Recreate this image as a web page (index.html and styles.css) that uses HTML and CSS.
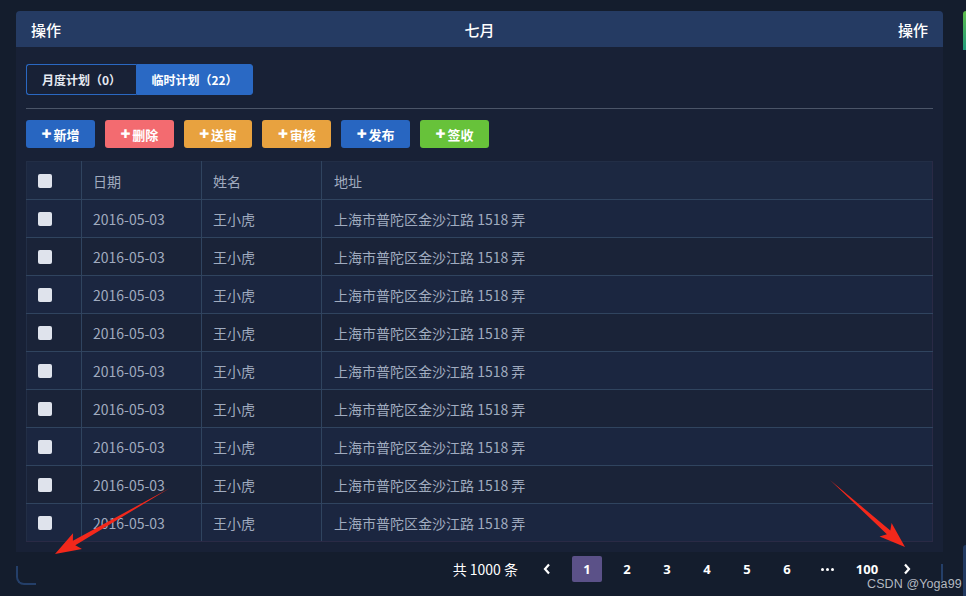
FILE: index.html
```html
<!DOCTYPE html>
<html lang="zh-CN">
<head>
<meta charset="utf-8">
<title>计划</title>
<link rel="stylesheet" href="styles.css">
</head>
<body>
<div class="page">
  <div class="main">
    <div class="panel">
      <div class="panel-head">
        <span>操作</span>
        <span>七月</span>
        <span>操作</span>
      </div>
      <div class="panel-body">
        <div class="tabs">
          <div class="tab">月度计划（0）</div>
          <div class="tab active">临时计划（22）</div>
        </div>
        <div class="divider"></div>
        <div class="actions">
          <button class="btn blue"><span class="plus">✚</span>新增</button>
          <button class="btn red"><span class="plus">✚</span>删除</button>
          <button class="btn orange"><span class="plus">✚</span>送审</button>
          <button class="btn orange"><span class="plus">✚</span>审核</button>
          <button class="btn blue"><span class="plus">✚</span>发布</button>
          <button class="btn green"><span class="plus">✚</span>签收</button>
        </div>
        <table class="grid">
          <thead>
            <tr><th class="c-chk"><span class="chk"></span></th><th class="c-date">日期</th><th class="c-name">姓名</th><th>地址</th></tr>
          </thead>
          <tbody>
            <tr><td class="c-chk"><span class="chk"></span></td><td>2016-05-03</td><td>王小虎</td><td>上海市普陀区金沙江路 1518 弄</td></tr>
            <tr><td class="c-chk"><span class="chk"></span></td><td>2016-05-03</td><td>王小虎</td><td>上海市普陀区金沙江路 1518 弄</td></tr>
            <tr><td class="c-chk"><span class="chk"></span></td><td>2016-05-03</td><td>王小虎</td><td>上海市普陀区金沙江路 1518 弄</td></tr>
            <tr><td class="c-chk"><span class="chk"></span></td><td>2016-05-03</td><td>王小虎</td><td>上海市普陀区金沙江路 1518 弄</td></tr>
            <tr><td class="c-chk"><span class="chk"></span></td><td>2016-05-03</td><td>王小虎</td><td>上海市普陀区金沙江路 1518 弄</td></tr>
            <tr><td class="c-chk"><span class="chk"></span></td><td>2016-05-03</td><td>王小虎</td><td>上海市普陀区金沙江路 1518 弄</td></tr>
            <tr><td class="c-chk"><span class="chk"></span></td><td>2016-05-03</td><td>王小虎</td><td>上海市普陀区金沙江路 1518 弄</td></tr>
            <tr><td class="c-chk"><span class="chk"></span></td><td>2016-05-03</td><td>王小虎</td><td>上海市普陀区金沙江路 1518 弄</td></tr>
            <tr><td class="c-chk"><span class="chk"></span></td><td>2016-05-03</td><td>王小虎</td><td>上海市普陀区金沙江路 1518 弄</td></tr>
          </tbody>
        </table>
      </div>
    </div>
    <div class="pager">
      <span class="corner"></span>
      <span class="total">共 1000 条</span>
      <span class="pg nav"><svg width="8" height="12" viewBox="0 0 8 12"><path d="M6 1.5 L2 6 L6 10.5" fill="none" stroke="#fff" stroke-width="2.2"/></svg></span>
      <span class="pg current">1</span>
      <span class="pg">2</span>
      <span class="pg">3</span>
      <span class="pg">4</span>
      <span class="pg">5</span>
      <span class="pg">6</span>
      <span class="pg more"><i class="dot"></i><i class="dot"></i><i class="dot"></i></span>
      <span class="pg wide">100</span>
      <span class="pg nav"><svg width="8" height="12" viewBox="0 0 8 12"><path d="M2 1.5 L6 6 L2 10.5" fill="none" stroke="#fff" stroke-width="2.2"/></svg></span>
      <span class="corner-r"></span>
    </div>
  </div>
  <div class="side">
    <span class="side-green"></span>
    <span class="side-blue"></span>
  </div>
</div>
<svg class="marks" width="966" height="596" viewBox="0 0 966 596">
  <polygon points="170,488 75.3,545.2 82,548.9 55,554 73,533.3 72.9,540.8" fill="#f3281b"/>
  <polygon points="830,480 886.9,534.2 879.6,536.4 905,547 891.6,523 890.3,530.5" fill="#f3281b"/>
</svg>
<div class="watermark">CSDN @Yoga99</div>
</body>
</html>
```

FILE: styles.css
```css
* { box-sizing: border-box; }
html, body {
  margin: 0;
  padding: 0;
  width: 966px;
  height: 596px;
  overflow: hidden;
  background: #141d2d;
  font-family: "Noto Sans CJK SC", "Noto Sans", sans-serif;
}
.page {
  position: relative;
  display: flex;
  height: 596px;
  padding-top: 11px;
}
.main {
  width: 927px;
  margin-left: 16px;
  display: flex;
  flex-direction: column;
}
.panel {
  background: #182136;
  border-radius: 4px 4px 0 0;
}
.panel-head {
  height: 36px;
  background: #253b63;
  border-radius: 4px 4px 0 0;
  display: flex;
  align-items: center;
  justify-content: space-between;
  padding: 0 15px;
  color: #ffffff;
  font-size: 15px;
  font-weight: 500;
}
.panel-body {
  padding: 17px 10px 10px;
}
.tabs {
  display: flex;
  height: 31px;
}
.tab {
  width: 110px;
  height: 31px;
  display: flex;
  align-items: center;
  justify-content: center;
  font-size: 12px;
  font-weight: 700;
  color: #e6eaf2;
  border: 1px solid #2a68c2;
  border-right: none;
  border-radius: 3px 0 0 3px;
  background: #182136;
}
.tab.active {
  width: 117px;
  background: #2a69c4;
  border-radius: 0 3px 3px 0;
  border: 1px solid #2a69c4;
  color: #ffffff;
}
.divider {
  height: 1px;
  background: #4b5568;
  margin-top: 13px;
}
.actions {
  display: flex;
  gap: 10px;
  margin-top: 11px;
}
.btn {
  width: 68.8px;
  height: 28px;
  border: none;
  border-radius: 3px;
  color: #ffffff;
  font-family: "Noto Sans CJK SC", sans-serif;
  font-size: 13px;
  font-weight: 700;
  display: flex;
  align-items: center;
  justify-content: center;
  padding: 0;
}
.plus {
  font-size: 12px;
  margin-right: 2px;
  font-family: "DejaVu Sans", sans-serif;
}
.blue { background: #2866c1; }
.red { background: #f36b70; }
.orange { background: #e8a23f; }
.green { background: #67c23a; }
.grid {
  margin-top: 13px;
  width: 100%;
  border-collapse: collapse;
  background: #1b2640;
  table-layout: fixed;
  font-size: 14px;
  color: #a0abbf;
}
.grid th, .grid td {
  height: 38px;
  padding: 0 0 0 11px;
  text-align: left;
  font-weight: 400;
  border: 1px solid #30445f;
  white-space: nowrap;
}
.grid thead th {
  border-top-color: #222e46;
  background: #1c2841;
}
.grid tbody tr:nth-child(even) td { background: #1a2338; }
.grid tbody tr:last-child td { border-bottom-color: #2a2a45; }
.grid tr > :first-child { border-left-color: #222e46; }
.grid tr > :last-child { border-right-color: #2a2a45; }
.c-chk { width: 55px; }
.c-date { width: 120px; }
.c-name { width: 120px; }
.grid td:nth-child(4), .grid th:nth-child(4) { padding-left: 12px; }
.chk {
  display: block;
  width: 14px;
  height: 14px;
  background: #dfe3ec;
  border-radius: 2px;
}
.pager {
  position: relative;
  display: flex;
  align-items: center;
  height: 26px;
  margin-top: 4px;
  padding-right: 21px;
  gap: 10px;
  color: #ffffff;
}
.corner {
  align-self: flex-start;
  margin-top: 10px;
  width: 20px;
  height: 19px;
  border-left: 2px solid #243f69;
  border-bottom: 2px solid #243f69;
  border-bottom-left-radius: 8px;
  margin-right: auto;
}
.total {
  font-size: 14px;
  margin-right: 4px;
}
.pg {
  width: 30px;
  height: 12px;
  display: flex;
  align-items: center;
  justify-content: center;
  font-size: 13px;
  line-height: 12px;
  font-weight: 700;
  border-radius: 2px;
  font-family: "Open Sans", sans-serif;
}
.pg.more { gap: 2px; }
.dot {
  display: block;
  width: 3px;
  height: 3px;
  border-radius: 50%;
  background: #ffffff;
}
.pg.current { height: 26px; background: #5b5188; }
.corner-r {
  position: absolute;
  right: 0;
  top: 8px;
  width: 2px;
  height: 17px;
  background: #243f69;
}
.side {
  margin-left: 20px;
  display: flex;
  flex-direction: column;
  justify-content: space-between;
  flex: 1;
}
.side-green {
  display: block;
  height: 39px;
  border-radius: 4px 0 0 0;
  background: linear-gradient(#5dbd4a, #1f9a7c);
}
.side-blue {
  display: block;
  height: 51px;
  border-radius: 4px 0 0 0;
  background: #223a62;
}
.marks {
  position: absolute;
  left: 0;
  top: 0;
  pointer-events: none;
}
.watermark {
  position: absolute;
  left: 867px;
  top: 578px;
  line-height: 12px;
  font-family: "Liberation Sans", Arial, sans-serif;
  font-size: 12.5px;
  color: rgba(210, 214, 222, 0.85);
  letter-spacing: 0.1px;
}
```
